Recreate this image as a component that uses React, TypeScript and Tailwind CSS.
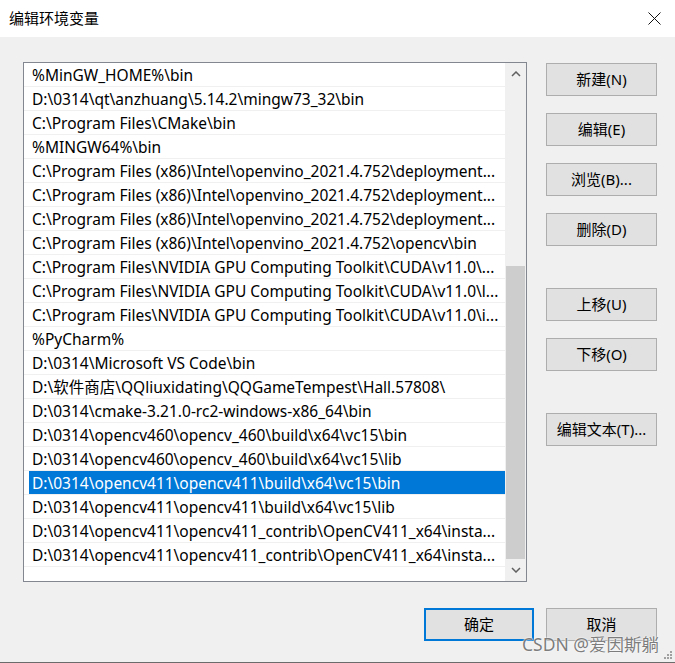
import React from "react";

const paths = [
  "%MinGW_HOME%\\bin",
  "D:\\0314\\qt\\anzhuang\\5.14.2\\mingw73_32\\bin",
  "C:\\Program Files\\CMake\\bin",
  "%MINGW64%\\bin",
  "C:\\Program Files (x86)\\Intel\\openvino_2021.4.752\\deployment...",
  "C:\\Program Files (x86)\\Intel\\openvino_2021.4.752\\deployment...",
  "C:\\Program Files (x86)\\Intel\\openvino_2021.4.752\\deployment...",
  "C:\\Program Files (x86)\\Intel\\openvino_2021.4.752\\opencv\\bin",
  "C:\\Program Files\\NVIDIA GPU Computing Toolkit\\CUDA\\v11.0\\...",
  "C:\\Program Files\\NVIDIA GPU Computing Toolkit\\CUDA\\v11.0\\l...",
  "C:\\Program Files\\NVIDIA GPU Computing Toolkit\\CUDA\\v11.0\\i...",
  "%PyCharm%",
  "D:\\0314\\Microsoft VS Code\\bin",
  "D:\\软件商店\\QQliuxidating\\QQGameTempest\\Hall.57808\\",
  "D:\\0314\\cmake-3.21.0-rc2-windows-x86_64\\bin",
  "D:\\0314\\opencv460\\opencv_460\\build\\x64\\vc15\\bin",
  "D:\\0314\\opencv460\\opencv_460\\build\\x64\\vc15\\lib",
  "D:\\0314\\opencv411\\opencv411\\build\\x64\\vc15\\bin",
  "D:\\0314\\opencv411\\opencv411\\build\\x64\\vc15\\lib",
  "D:\\0314\\opencv411\\opencv411_contrib\\OpenCV411_x64\\insta...",
  "D:\\0314\\opencv411\\opencv411_contrib\\OpenCV411_x64\\insta...",
];

const SELECTED = 17;

function WinButton({ label, className = "" }: { label: string; className?: string }) {
  return (
    <div
      className={`w-[111px] h-[33px] flex items-center justify-center bg-[#e1e1e1] border border-[#adadad] text-[15px] text-black ${className}`}
    >
      {label}
    </div>
  );
}

export default function App() {
  return (
    <div
      className="relative w-[675px] h-[663px] flex flex-col overflow-hidden border-b border-[#6b6b6b]"
      style={{ fontFamily: '"Noto Sans", "Noto Sans CJK SC", sans-serif' }}
    >
      {/* Title bar */}
      <div className="h-[37px] bg-white flex items-center justify-between pl-[9px] pr-[14px]">
        <span className="text-[15px] text-black">编辑环境变量</span>
        <svg width="13" height="13" viewBox="0 0 13 13" className="mt-[-1px]">
          <path d="M0.5 0.5 L12.5 12.5 M12.5 0.5 L0.5 12.5" stroke="#111" strokeWidth="1" fill="none" />
        </svg>
      </div>

      {/* Body */}
      <div className="flex-1 bg-[#f0f0f0] flex flex-col">
        <div className="flex pl-[23px] pt-[25px]">
          {/* List */}
          <div className="w-[504px] h-[520px] border border-[#828790] bg-white flex">
            <div className="flex-1 flex flex-col overflow-hidden">
              {paths.map((p, i) => (
                <div key={i} className="h-[24px] border-b border-[#f0f0f0] flex">
                  <div
                    className={`ml-[5px] flex-1 h-[23px] pl-[3px] pt-[3px] flex items-center whitespace-nowrap overflow-hidden text-[15.5px] ${
                      i === SELECTED ? "bg-[#0078d7] text-white" : "text-black"
                    }`}
                  >
                    {p}
                  </div>
                </div>
              ))}
            </div>
            {/* Scrollbar */}
            <div className="w-[21px] bg-[#f0f0f0] flex flex-col">
              <div className="h-[21px] flex items-center justify-center">
                <svg width="10" height="6" viewBox="0 0 10 6">
                  <path d="M1 5 L5 1 L9 5" stroke="#606060" strokeWidth="1.5" fill="none" />
                </svg>
              </div>
              <div className="h-[182px]" />
              <div className="h-[293px] mx-[1px] bg-[#cdcdcd]" />
              <div className="flex-1 flex items-center justify-center">
                <svg width="10" height="6" viewBox="0 0 10 6">
                  <path d="M1 1 L5 5 L9 1" stroke="#606060" strokeWidth="1.5" fill="none" />
                </svg>
              </div>
            </div>
          </div>

          {/* Buttons */}
          <div className="ml-[19px] pt-[1px] flex flex-col">
            <WinButton label="新建(N)" />
            <WinButton label="编辑(E)" className="mt-[17px]" />
            <WinButton label="浏览(B)..." className="mt-[17px]" />
            <WinButton label="删除(D)" className="mt-[17px]" />
            <WinButton label="上移(U)" className="mt-[42px]" />
            <WinButton label="下移(O)" className="mt-[17px]" />
            <WinButton label="编辑文本(T)..." className="mt-[42px]" />
          </div>
        </div>

        {/* Bottom buttons */}
        <div className="flex justify-end gap-[12px] pr-[18px] mt-[26px]">
          <div className="w-[110px] h-[33px] flex items-center justify-center bg-[#e1e1e1] border-2 border-[#0078d7] text-[15px] text-black">
            确定
          </div>
          <WinButton label="取消" />
        </div>
      </div>

      {/* Watermark */}
      <div
        className="absolute left-[522px] top-[631px] text-[17.5px] text-[#7d7d7d] whitespace-nowrap"
        style={{ textShadow: "0 0 2px #fff, 0 0 1px #fff" }}
      >
        CSDN @爱因斯躺
      </div>

      {/* Resize grip */}
      <div className="absolute right-[3px] bottom-[3px] grid grid-cols-3 gap-[1px]">
        {[0, 1, 2, 3, 4, 5, 6, 7, 8].map((k) => (
          <div
            key={k}
            className={`w-[2px] h-[2px] ${k === 2 || k === 4 || k === 5 || k >= 6 ? "bg-[#a0a0a0]" : "bg-transparent"}`}
          />
        ))}
      </div>
    </div>
  );
}
